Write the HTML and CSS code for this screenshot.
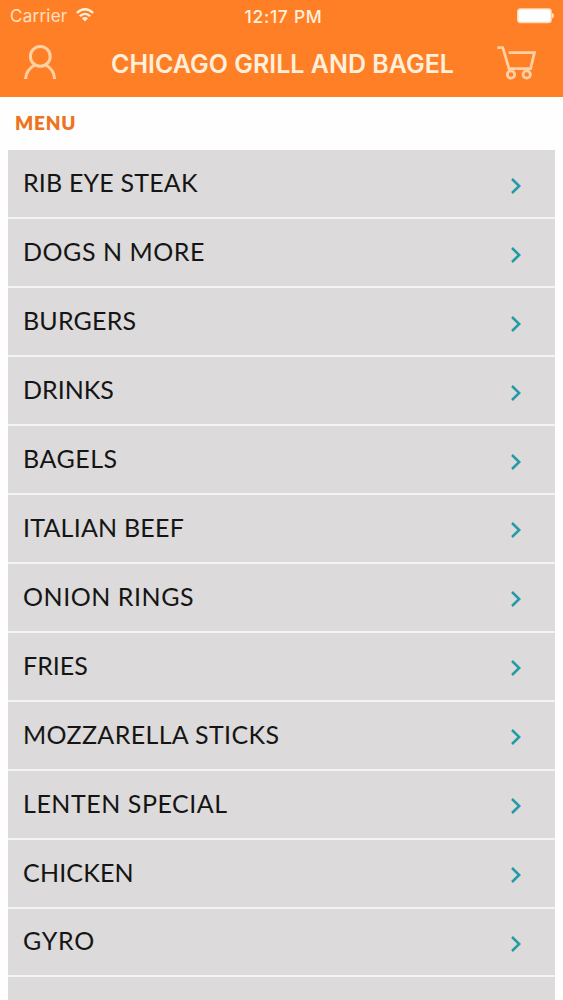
FILE: index.html
```html
<!doctype html>
<html lang="en">
<head>
    <meta charset="utf-8">
    <meta name="viewport" content="width=device-width, initial-scale=1">
    <title>Chicago Grill and Bagel</title>
    <link rel="stylesheet" href="styles.css">
</head>
<body>
<svg class="defs" width="0" height="0">
    <symbol id="chevron" viewBox="0 0 12 18">
        <path d="M2 2 L9.2 9 L2 16" fill="none" stroke="#229ba4" stroke-width="2.5"/>
    </symbol>
</svg>
<header class="header">
    <div class="status">
        <div class="status-left">
            <span class="carrier">Carrier</span>
            <svg class="wifi" width="18" height="14" viewBox="0 0 18 14">
                <g fill="none" stroke="#fff0dc" stroke-width="2.3">
                    <path d="M0.9 5 Q9 -2.4 17.1 5"/>
                    <path d="M3.8 8.2 Q9 3.6 14.2 8.2"/>
                </g>
                <path d="M5.9 10.3 Q9 7.6 12.1 10.3 L9 13.4 Z" fill="#fff0dc"/>
            </svg>
        </div>
        <span class="time">12:17 PM</span>
        <div class="status-right">
            <svg class="battery" width="38" height="16" viewBox="0 0 38 16">
                <rect x="1.7" y="0.9" width="33.4" height="13.6" rx="2.5" fill="#fff" stroke="#ffd9b8" stroke-width="1.4"/>
                <path d="M36 5 Q38 5.4 38 7.7 Q38 10 36 10.4 Z" fill="#ffe3c8"/>
            </svg>
        </div>
    </div>
    <div class="navbar">
        <svg class="user" width="34" height="36" viewBox="0 0 34 36">
            <g fill="none" stroke="#ffd0a3" stroke-width="3">
                <circle cx="17.3" cy="11.4" r="9.9"/>
                <path d="M2.6 34 C3 27.6 6.6 22.6 12 20 M22.6 20 C28 22.6 31.2 27.6 31.6 34"/>
            </g>
        </svg>
        <h1 class="title">CHICAGO GRILL AND BAGEL</h1>
        <svg class="cart" width="41" height="36" viewBox="0 0 41 36">
            <g fill="none" stroke="#ffd0a3" stroke-width="2.8">
                <path d="M0.4 2.6 H5.8 L12 23.6 H33.6 L37.4 7.6 H11.6"/>
                <circle cx="14" cy="29.5" r="3.7"/>
                <circle cx="29.7" cy="29.5" r="3.7"/>
            </g>
        </svg>
    </div>
</header>
<main class="content">
    <h2 class="heading">MENU</h2>
    <ul class="menu">
        <li class="item"><span class="name steak">RIB EYE STEAK</span><svg class="arrow"><use href="#chevron"/></svg></li>
        <li class="item"><span class="name dogs">DOGS N MORE</span><svg class="arrow"><use href="#chevron"/></svg></li>
        <li class="item"><span class="name burgers">BURGERS</span><svg class="arrow"><use href="#chevron"/></svg></li>
        <li class="item"><span class="name drinks">DRINKS</span><svg class="arrow"><use href="#chevron"/></svg></li>
        <li class="item"><span class="name bagels">BAGELS</span><svg class="arrow"><use href="#chevron"/></svg></li>
        <li class="item"><span class="name beef">ITALIAN BEEF</span><svg class="arrow"><use href="#chevron"/></svg></li>
        <li class="item"><span class="name rings">ONION RINGS</span><svg class="arrow"><use href="#chevron"/></svg></li>
        <li class="item"><span class="name fries">FRIES</span><svg class="arrow"><use href="#chevron"/></svg></li>
        <li class="item"><span class="name sticks">MOZZARELLA STICKS</span><svg class="arrow"><use href="#chevron"/></svg></li>
        <li class="item"><span class="name lenten">LENTEN SPECIAL</span><svg class="arrow"><use href="#chevron"/></svg></li>
        <li class="item"><span class="name chicken">CHICKEN</span><svg class="arrow"><use href="#chevron"/></svg></li>
        <li class="item"><span class="name gyro">GYRO</span><svg class="arrow"><use href="#chevron"/></svg></li>
        <li class="item"></li>
    </ul>
</main>
</body>
</html>
```

FILE: styles.css
```css
html, body {
    height: 100%;
    margin: 0;
}
body {
    display: flex;
    flex-direction: column;
    overflow: hidden;
    background: #fefefe;
    font-family: Lato, sans-serif;
}
.defs {
    display: none;
}
.header {
    flex: none;
    height: 96.5px;
    background: #ff7f27;
    font-family: Inter, sans-serif;
}
.status {
    display: grid;
    grid-template-columns: 1fr auto 1fr;
    align-items: center;
    height: 32px;
    padding: 0 9px 0 10px;
    color: #fff0dc;
}
.status-left {
    display: flex;
    align-items: center;
    gap: 9px;
}
.carrier {
    color: #ffe0c0;
    font-size: 17px;
    letter-spacing: 0.25px;
}
.wifi {
    margin-top: -2px;
}
.time {
    padding-left: 3px;
    font-size: 17.5px;
    font-weight: 500;
    letter-spacing: 0.7px;
}
.status-right {
    display: flex;
    justify-content: flex-end;
}
.navbar {
    display: flex;
    align-items: center;
    height: 62px;
    padding: 0 25px 0 23px;
}
.title {
    margin: 1px auto 0 54px;
    color: #fff0dc;
    font-size: 25px;
    font-weight: 600;
    white-space: nowrap;
}
.content {
    flex: 1;
    min-height: 0;
    padding: 0 8px;
}
.heading {
    height: 53.9px;
    margin: 0;
    padding-left: 7px;
    color: #ee7320;
    font-size: 19px;
    font-weight: 800;
    letter-spacing: 0.8px;
    line-height: 51px;
}
.menu {
    margin: 0;
    padding: 0;
    list-style: none;
}
.item {
    display: flex;
    align-items: center;
    justify-content: space-between;
    box-sizing: border-box;
    height: 68.93px;
    padding: 0 33px 0 15px;
    border-bottom: 2px solid #f4f4f4;
    background: #dcdada;
}
.name {
    margin-bottom: 3px;
    color: #151515;
    font-size: 25px;
    line-height: 30px;
    white-space: nowrap;
}
.arrow {
    width: 12px;
    height: 18px;
    margin-top: 4px;
}

/* tracking per label */
.steak, .burgers, .chicken {
    letter-spacing: 0.18px;
}
.beef {
    letter-spacing: 0.22px;
}
.sticks {
    letter-spacing: 0.36px;
}
.dogs, .rings, .bagels, .lenten {
    letter-spacing: 0.54px;
}
.gyro {
    letter-spacing: 0.8px;
}
```
